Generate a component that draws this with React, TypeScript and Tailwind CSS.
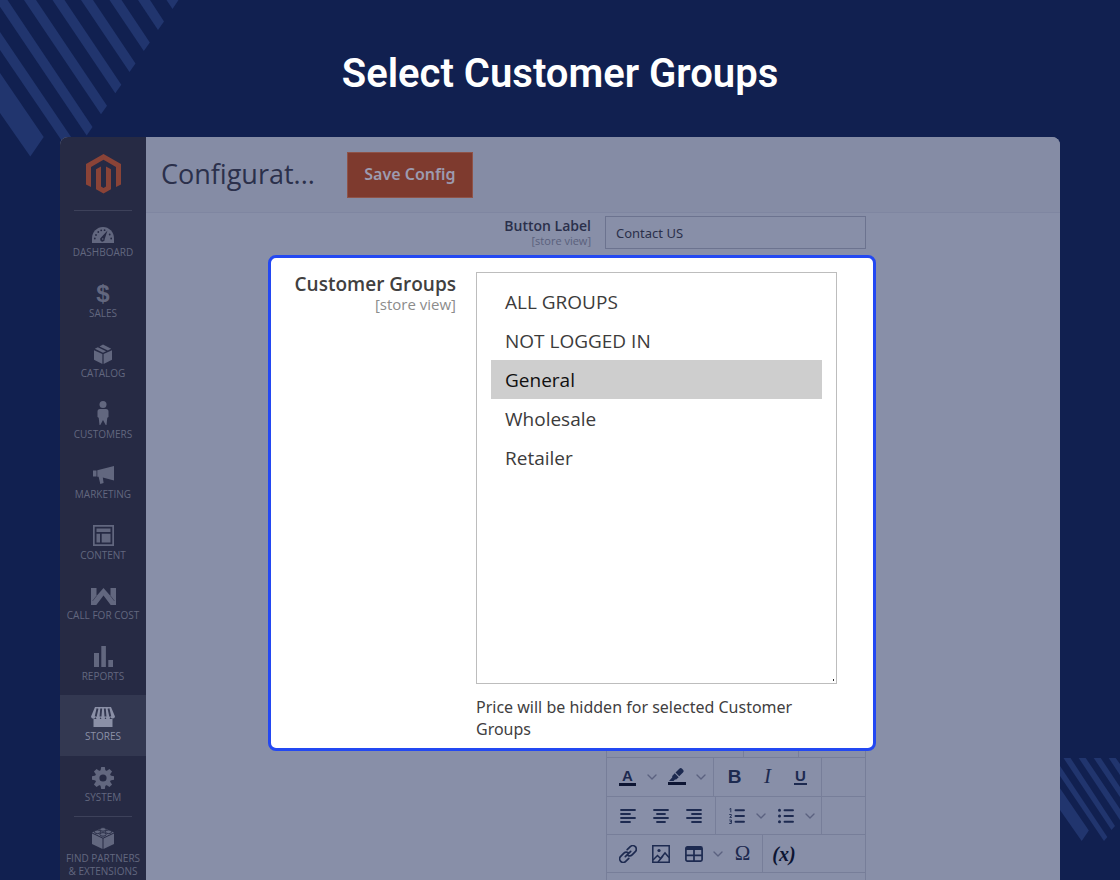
import type { ReactNode } from 'react'
import { ChevronDown } from 'lucide-react'

type NavItem = { label: string; icon: ReactNode; active?: boolean }

const GEAR_TEETH = [0, 45, 90, 135, 180, 225, 270, 315]

const NAV_ITEMS: NavItem[] = [
  {
    label: 'DASHBOARD',
    icon: (
      <svg width="22" height="20" viewBox="0 -4 22 20" fill="currentColor">
        <path d="M0 16v-4.500a11 11.500 0 0 1 22 0V16z" />
        <g fill="#262a44">
          <path d="M15.500 3.500 12.700 12a2.300 2.300 0 1 1-3.400-1.700z" />
          <circle cx="2.800" cy="11.500" r=".9" />
          <circle cx="4" cy="8" r=".9" />
          <circle cx="6.300" cy="5" r=".9" />
          <circle cx="9.200" cy="3.300" r=".9" />
          <circle cx="12.600" cy="3.200" r=".9" />
          <circle cx="17.700" cy="7.500" r=".9" />
          <circle cx="19.200" cy="11.500" r=".9" />
        </g>
        <circle cx="10.700" cy="12" r=".8" />
      </svg>
    ),
  },
  {
    label: 'SALES',
    icon: <span className="font-['Liberation_Sans'] text-[24px] leading-[22px] font-bold">$</span>,
  },
  {
    label: 'CATALOG',
    icon: (
      <svg width="18" height="20" viewBox="0 0 18 20" fill="currentColor">
        <path d="M0 6.200 8.400 10v10L0 15.800z" />
        <path d="M18 6.200 9.600 10v10l8.400-4.200z" />
        <path d="m.8 4.800 3-1.500 8.300 3.900L9 8.700z" />
        <path d="m5.500 2.400 3.500-1.900 8.200 4.300-3.300 1.600z" />
      </svg>
    ),
  },
  {
    label: 'CUSTOMERS',
    icon: (
      <svg width="12" height="28" viewBox="0 0 12 28" fill="currentColor" className="shrink-0">
        <circle cx="6" cy="3.500" r="3.500" />
        <path d="M3 8h6a2.500 2.500 0 0 1 2.500 2.500V16l-1.200.8-.8 7.200H8.700L6 19l-2.700 5h-.8l-.8-7.200L.5 16v-5.500A2.500 2.500 0 0 1 3 8z" />
      </svg>
    ),
  },
  {
    label: 'MARKETING',
    icon: (
      <svg width="21" height="18" viewBox="0 0 21 18" fill="currentColor">
        <path d="M0 4.500h3.500v6H0z" />
        <path d="M4.300 4.300 21 0v14.500l-11.200-3 .8 5.500-3.300 1L5.600 10.800H4.300z" />
      </svg>
    ),
  },
  {
    label: 'CONTENT',
    icon: (
      <svg width="21" height="21" viewBox="0 0 21 21" fill="currentColor">
        <path d="M0 0h21v21H0zM1.700 1.700v17.600h17.600V1.700z" fillRule="evenodd" />
        <path d="M3.500 3.500h14v3.500h-14zM3.500 8.700H7v8.800H3.500zM8.700 8.700h8.800v8.800H8.700z" />
      </svg>
    ),
  },
  {
    label: 'CALL FOR COST',
    icon: (
      <svg width="25" height="17" viewBox="0 0 25 17" fill="currentColor">
        <path d="M0 0h5.500v8L12.500 0l7 8V0H25v17h-5.300l-7.200-9.500L5.300 17H0z" />
        <path d="m5.500 8-4 5M19.500 8l4 5" stroke="#262a44" strokeWidth=".5" fill="none" />
      </svg>
    ),
  },
  {
    label: 'REPORTS',
    icon: (
      <svg width="19" height="21" viewBox="0 0 19 21" fill="currentColor">
        <path d="M0 7h5v14H0zM7.300 0h4.600v21H7.300zM14.300 14H19v7h-4.700z" />
      </svg>
    ),
  },
  {
    label: 'STORES',
    active: true,
    icon: (
      <svg width="24" height="20" viewBox="0 0 24 20" fill="currentColor">
        <path d="M4 0h16l4 9.500a2.400 2.400 0 0 1-4.600.5 2.400 2.400 0 0 1-4.900 0 2.400 2.400 0 0 1-4.900 0 2.400 2.400 0 0 1-4.900 0A2.400 2.400 0 0 1 0 9.500z" />
        <path d="M2.500 12h19v8h-19z" />
        <path
          d="M6.500 1.500 4.700 9.500M10.200 1.500 9.500 9.500M13.800 1.500l.7 8M17.500 1.500l1.800 8"
          stroke="#333851"
          strokeWidth="1.900"
          fill="none"
        />
      </svg>
    ),
  },
  {
    label: 'SYSTEM',
    icon: (
      <svg width="22" height="22" viewBox="0 0 22 22" fill="currentColor">
        {GEAR_TEETH.map(a => (
          <path key={a} d="M9.200 0h3.600l.9 5H8.300z" transform={`rotate(${a} 11 11)`} />
        ))}
        <circle cx="11" cy="11" r="5.800" fill="none" stroke="currentColor" strokeWidth="4.400" />
      </svg>
    ),
  },
]

const partnersIcon = (
  <svg width="22" height="22" viewBox="0 0 22 22" fill="currentColor">
    <path d="M0 6.500 10.500 11.500v10.500L0 17zM22 6.500 11.500 11.500v10.500L22 17z" />
    <path d="M11 .500 22 5.500 11 10.700 0 5.500z" />
    <g stroke="#262a44" strokeWidth=".9">
      <ellipse cx="11" cy="2.400" rx="3.100" ry="1.800" />
      <ellipse cx="5.500" cy="4.800" rx="3.100" ry="1.800" />
      <ellipse cx="16.500" cy="4.800" rx="3.100" ry="1.800" />
      <ellipse cx="11" cy="7.400" rx="3.100" ry="1.800" />
    </g>
  </svg>
)

function Stripes() {
  return (
    <>
      <svg className="absolute top-0 left-0" width="180" height="160" fill="#21356e" aria-hidden="true">
        <path d="M0 73 43.700 137 30.300 156.500 0 113z" />
        <path d="M0 32 78.500 148l-6 8.500L0 50z" />
        <path d="M-4.500 0h12l85 127-5.800 8.500z" />
        <path d="M24 0h12l71 105.700-6 8.600z" />
        <path d="M52.500 0h12l56.800 84.700-6 8.600z" />
        <path d="M81 0h12l42.500 63.500-6 8.600z" />
        <path d="M109.500 0h12l28.300 42.500-6 8.600z" />
        <path d="M138 0h12l14 21.500-6 8.600z" />
        <path d="M166.500 0h12l-6 9z" />
      </svg>
      <svg
        className="absolute right-0 bottom-[32px]"
        width="60"
        height="90"
        viewBox="0 0 60 90"
        fill="#21356e"
        aria-hidden="true"
      >
        <path d="M0 30.300 28.800 72.500 21.700 83 0 52z" />
        <path d="M0 8 47.300 79 44 83 0 18z" />
        <path d="M3.500 0h7L55 68l-3.500 4z" />
        <path d="M18.700 0h7L60 51v11z" />
        <path d="M33.700 0h7L60 29v10z" />
        <path d="M48.700 0h7L60 6v11z" />
      </svg>
    </>
  )
}

function MagentoLogo() {
  return (
    <svg width="35" height="40" viewBox="0 0 35 40" fill="#8a4337" aria-label="Magento">
      <path d="M17.500 0 35 10v20.500l-5 2.500V13L17.500 5.700 5 13v20l-5-2.500V10z" />
      <path d="m10 15.200 5-2.800V32.500l2.500 1.500 2.500-1.500V12.400l5 2.800v20L17.500 39.500 10 35.200z" />
    </svg>
  )
}

function Sidebar() {
  return (
    <aside className="flex w-[86px] shrink-0 flex-col bg-[#262a44] text-[#62677f]">
      <div className="flex h-[73px] shrink-0 items-center justify-center">
        <MagentoLogo />
      </div>
      <hr className="mx-[14px] border-[#3d415a]" />
      <nav className="flex h-[605px] shrink-0 flex-col">
        {NAV_ITEMS.map(item => (
          <a
            key={item.label}
            href="#"
            className={
              item.active
                ? 'flex flex-1 flex-col items-center gap-px bg-[#333851] pt-[10px] font-medium text-[#8b90a7]'
                : 'flex flex-1 flex-col items-center gap-px pt-[10px]'
            }
          >
            <span className="flex h-[24px] items-center justify-center">{item.icon}</span>
            <span className="text-[10px] leading-[13px] whitespace-nowrap">{item.label}</span>
          </a>
        ))}
      </nav>
      <hr className="mx-[14px] border-[#3d415a]" />
      <a href="#" className="flex shrink-0 flex-col items-center gap-0.5 pt-[9px] text-center">
        <span className="flex h-[24px] items-center">{partnersIcon}</span>
        <span className="text-[10px] leading-[13px] whitespace-nowrap">
          FIND PARTNERS
          <br />
          &amp; EXTENSIONS
        </span>
      </a>
    </aside>
  )
}

const toolButton = 'flex h-[34px] w-[33px] shrink-0 items-center justify-center'
const arrowButton = 'flex h-[34px] w-4 shrink-0 items-center justify-center text-[#5b6280]'

function Arrow({ label }: { label: string }) {
  return (
    <button type="button" aria-label={label} className={arrowButton}>
      <ChevronDown size={16} strokeWidth={2} />
    </button>
  )
}

function AlignIcon({ d }: { d: string }) {
  return (
    <svg width="16" height="16" viewBox="0 0 16 16" fill="none" stroke="currentColor" strokeWidth="1.800" strokeLinecap="round">
      <path d={d} />
    </svg>
  )
}

function EditorToolbar() {
  return (
    <div className="w-[260px] border-x border-[#777e99] text-[#1d2a50]">
      {/* bottom edge of the first tool row */}
      <div className="flex h-[7px] border-b border-[#777e99]">
        <div className="w-[137px] border-r border-[#777e99]" />
        <div className="w-[55px] border-r border-[#777e99]" />
      </div>
      <div className="flex h-[39px] border-b border-[#777e99]">
        <div className="flex w-[107px] items-center border-r border-[#777e99] pl-1">
          <button type="button" aria-label="Text color" className={toolButton}>
            <span className="border-b-[3px] border-[#0d1533] px-[3px] font-['Liberation_Sans'] text-[15px] leading-[15px] font-bold">
              A
            </span>
          </button>
          <Arrow label="Text color options" />
          <button type="button" aria-label="Background color" className={toolButton}>
            <svg width="18" height="18" viewBox="0 0 18 18" fill="currentColor">
              <path d="m7.500 4.500 3.800-3.700a2 2 0 0 1 2.800 0l.9.900a2 2 0 0 1 0 2.800l-3.800 3.700zM6.700 5.300l4 3.900-2.500 2.300-1.200.1L5.500 13H1l3.200-3.500V8z" />
              <path d="M0 14h18v3H0z" fill="#0d1533" />
            </svg>
          </button>
          <Arrow label="Background color options" />
        </div>
        <div className="flex w-[108px] items-center border-r border-[#777e99] pl-1">
          <button type="button" className={`${toolButton} font-['Liberation_Sans'] text-[19px] font-bold`}>
            B
          </button>
          <button type="button" className={`${toolButton} font-['Liberation_Serif'] text-[21px] italic`}>
            I
          </button>
          <button type="button" className={`${toolButton}`}>
            <span className="border-b-2 border-[#1d2a50] px-px font-['Liberation_Sans'] text-[15px] leading-[14px] font-bold">
              U
            </span>
          </button>
        </div>
      </div>
      <div className="flex h-[38px] border-b border-[#777e99]">
        <div className="flex w-[109px] items-center border-r border-[#777e99] pl-1">
          <button type="button" aria-label="Align left" className={toolButton}>
            <AlignIcon d="M1 2h14M1 6h9M1 10h14M1 14h9" />
          </button>
          <button type="button" aria-label="Align center" className={toolButton}>
            <AlignIcon d="M1 2h14M4 6h8M1 10h14M4 14h8" />
          </button>
          <button type="button" aria-label="Align right" className={toolButton}>
            <AlignIcon d="M1 2h14M6 6h9M1 10h14M6 14h9" />
          </button>
        </div>
        <div className="flex w-[106px] items-center border-r border-[#777e99] pl-1">
          <button type="button" aria-label="Numbered list" className={toolButton}>
            <svg width="16" height="16" viewBox="0 0 16 16" fill="none" stroke="currentColor" strokeLinecap="round">
              <path d="M6.500 2.200H15M6.500 8H15M6.500 13.800H15" strokeWidth="1.900" />
              <path d="m.8 1 1-.6V4M.6 6.500h1.700v1.200L.8 9.400h1.700M.6 12h1.800v3.500H.6M1.200 13.700h1" strokeWidth=".9" />
            </svg>
          </button>
          <Arrow label="Numbered list options" />
          <button type="button" aria-label="Bullet list" className={toolButton}>
            <svg width="16" height="16" viewBox="0 0 16 16" fill="none" stroke="currentColor" strokeLinecap="round">
              <path d="M6.500 2.200H15M6.500 8H15M6.500 13.800H15" strokeWidth="1.900" />
              <path d="M1.500 2.200h.01M1.500 8h.01M1.500 13.800h.01" strokeWidth="3" />
            </svg>
          </button>
          <Arrow label="Bullet list options" />
        </div>
      </div>
      <div className="flex h-[38px] border-b border-[#777e99]">
        <div className="flex w-[156px] items-center border-r border-[#777e99] pl-1">
          <button type="button" aria-label="Insert link" className={toolButton}>
            <svg width="18" height="18" viewBox="0 0 18 18" fill="none" stroke="currentColor" strokeWidth="1.700" strokeLinecap="round">
              <path d="m6.300 11.700 5.400-5.400" />
              <path d="M8.200 4.700 11.300 1.700a3.400 3.400 0 0 1 5 5l-3.200 3.200a3.400 3.400 0 0 1-4.300.4" />
              <path d="m9.800 13.300-3.100 3a3.400 3.400 0 0 1-5-5l3.200-3.200a3.400 3.400 0 0 1 4.300-.4" />
            </svg>
          </button>
          <button type="button" aria-label="Insert image" className={toolButton}>
            <svg width="18" height="18" viewBox="0 0 18 18" fill="none" stroke="currentColor" strokeWidth="1.500">
              <path d="M.8.800h16.400v16.400H.8z" />
              <circle cx="7" cy="5.500" r="1.600" fill="currentColor" stroke="none" />
              <path d="m1 15 4.500-4.500 3 3L13 8l4 4.500M6 17l5-6" />
            </svg>
          </button>
          <button type="button" aria-label="Insert table" className={toolButton}>
            <svg width="18" height="16" viewBox="0 0 18 16" fill="none" stroke="currentColor" strokeWidth="1.700">
              <rect x=".9" y=".9" width="16.200" height="14.200" rx="1.500" />
              <path d="M1 2.500h16" strokeWidth="3" />
              <path d="M1 9.300h16M9 3v12" />
            </svg>
          </button>
          <Arrow label="Table options" />
          <button type="button" aria-label="Special character" className={toolButton}>
            <span className="font-['Liberation_Serif'] text-[21px]">Ω</span>
          </button>
        </div>
        <button
          type="button"
          aria-label="Insert variable"
          className="flex w-[42px] items-center justify-center font-['Liberation_Serif'] text-[20px] font-bold text-[#0d1533] italic"
        >
          (x)
        </button>
      </div>
    </div>
  )
}

function CustomerGroupsCard() {
  return (
    <section className="flex h-[496px] shrink-0 rounded-lg border-[3px] border-[#2348f2] bg-white pt-[14px] pr-[36px] text-[#41403f]">
      <div className="flex-1 pr-5 text-right">
        <label htmlFor="customer-groups" className="block text-[19px] leading-[25px] font-semibold">
          Customer Groups
        </label>
        <span className="block text-[15px] leading-[15px] text-[#8c8c8c]">[store view]</span>
      </div>
      <div className="w-[361px]">
        <div className="relative h-[412px]">
          <select
            id="customer-groups"
            multiple
            defaultValue={['general']}
            className="h-full w-full appearance-none overflow-hidden border border-[#bdbdbd] bg-white px-[14px] py-[9px] font-['Open_Sans'] text-[19px] text-[#3c3b3b] outline-none"
          >
            <option value="all" className="flex h-[39px] items-center px-[14px] py-0">ALL GROUPS</option>
            <option value="guest" className="flex h-[39px] items-center px-[14px] py-0">NOT LOGGED IN</option>
            <option value="general" className="flex h-[39px] items-center px-[14px] py-0 checked:bg-[#cecece]">General</option>
            <option value="wholesale" className="flex h-[39px] items-center px-[14px] py-0">Wholesale</option>
            <option value="retailer" className="flex h-[39px] items-center px-[14px] py-0">Retailer</option>
          </select>
          <span className="absolute right-[3px] bottom-[3px] h-[2px] w-px bg-[#303030]" />
        </div>
        <p className="pt-3 font-['Noto_Sans'] text-[16px] leading-[22px]">
          Price will be hidden for selected Customer Groups
        </p>
      </div>
    </section>
  )
}

export default function App() {
  return (
    <div className="relative flex h-screen flex-col overflow-hidden bg-[#112050] font-['Open_Sans',sans-serif]">
      <Stripes />
      <h1 className="pt-[50px] pb-[39px] text-center font-['Roboto'] text-[40px] leading-[48px] font-semibold text-white">
        Select Customer Groups
      </h1>
      <div className="relative mx-[60px] flex min-h-0 flex-1 overflow-hidden rounded-t-lg bg-[#888fa8]">
        <Sidebar />
        <main className="flex min-w-0 flex-1 flex-col">
          <header className="flex h-[76px] shrink-0 items-center gap-8 border-b border-[#7f86a1] bg-[#858ca5] pl-[15px]">
            <h2 className="pb-0.5 text-[27px] leading-[36px] text-[#2b304b]">Configurat...</h2>
            <button
              type="button"
              className="h-[46px] w-[126px] border border-[#8f5348] bg-[#7e3a2e] pb-0.5 font-['Noto_Sans'] text-[16px] font-semibold text-[#9c9bb0]"
            >
              Save Config
            </button>
          </header>
          <form className="ml-[122px] flex w-[608px] flex-1 flex-col">
            <div className="flex h-[42px] shrink-0 pt-[3px] pr-[10px]">
              <div className="flex-1 pr-[14px] text-right text-[#2b304b]">
                <label htmlFor="button-label" className="block text-[14px] leading-[19px] font-semibold">
                  Button Label
                </label>
                <span className="block text-[11px] leading-[11px] text-[#5a607c]">[store view]</span>
              </div>
              <input
                id="button-label"
                type="text"
                defaultValue="Contact US"
                className="h-[33px] w-[261px] border border-[#6c738f] bg-transparent px-[10px] font-['Noto_Sans'] text-[13px] text-[#2b304b] outline-none"
              />
            </div>
            <CustomerGroupsCard />
            <div className="flex flex-1 justify-end pr-[10px]">
              <EditorToolbar />
            </div>
          </form>
        </main>
      </div>
    </div>
  )
}
